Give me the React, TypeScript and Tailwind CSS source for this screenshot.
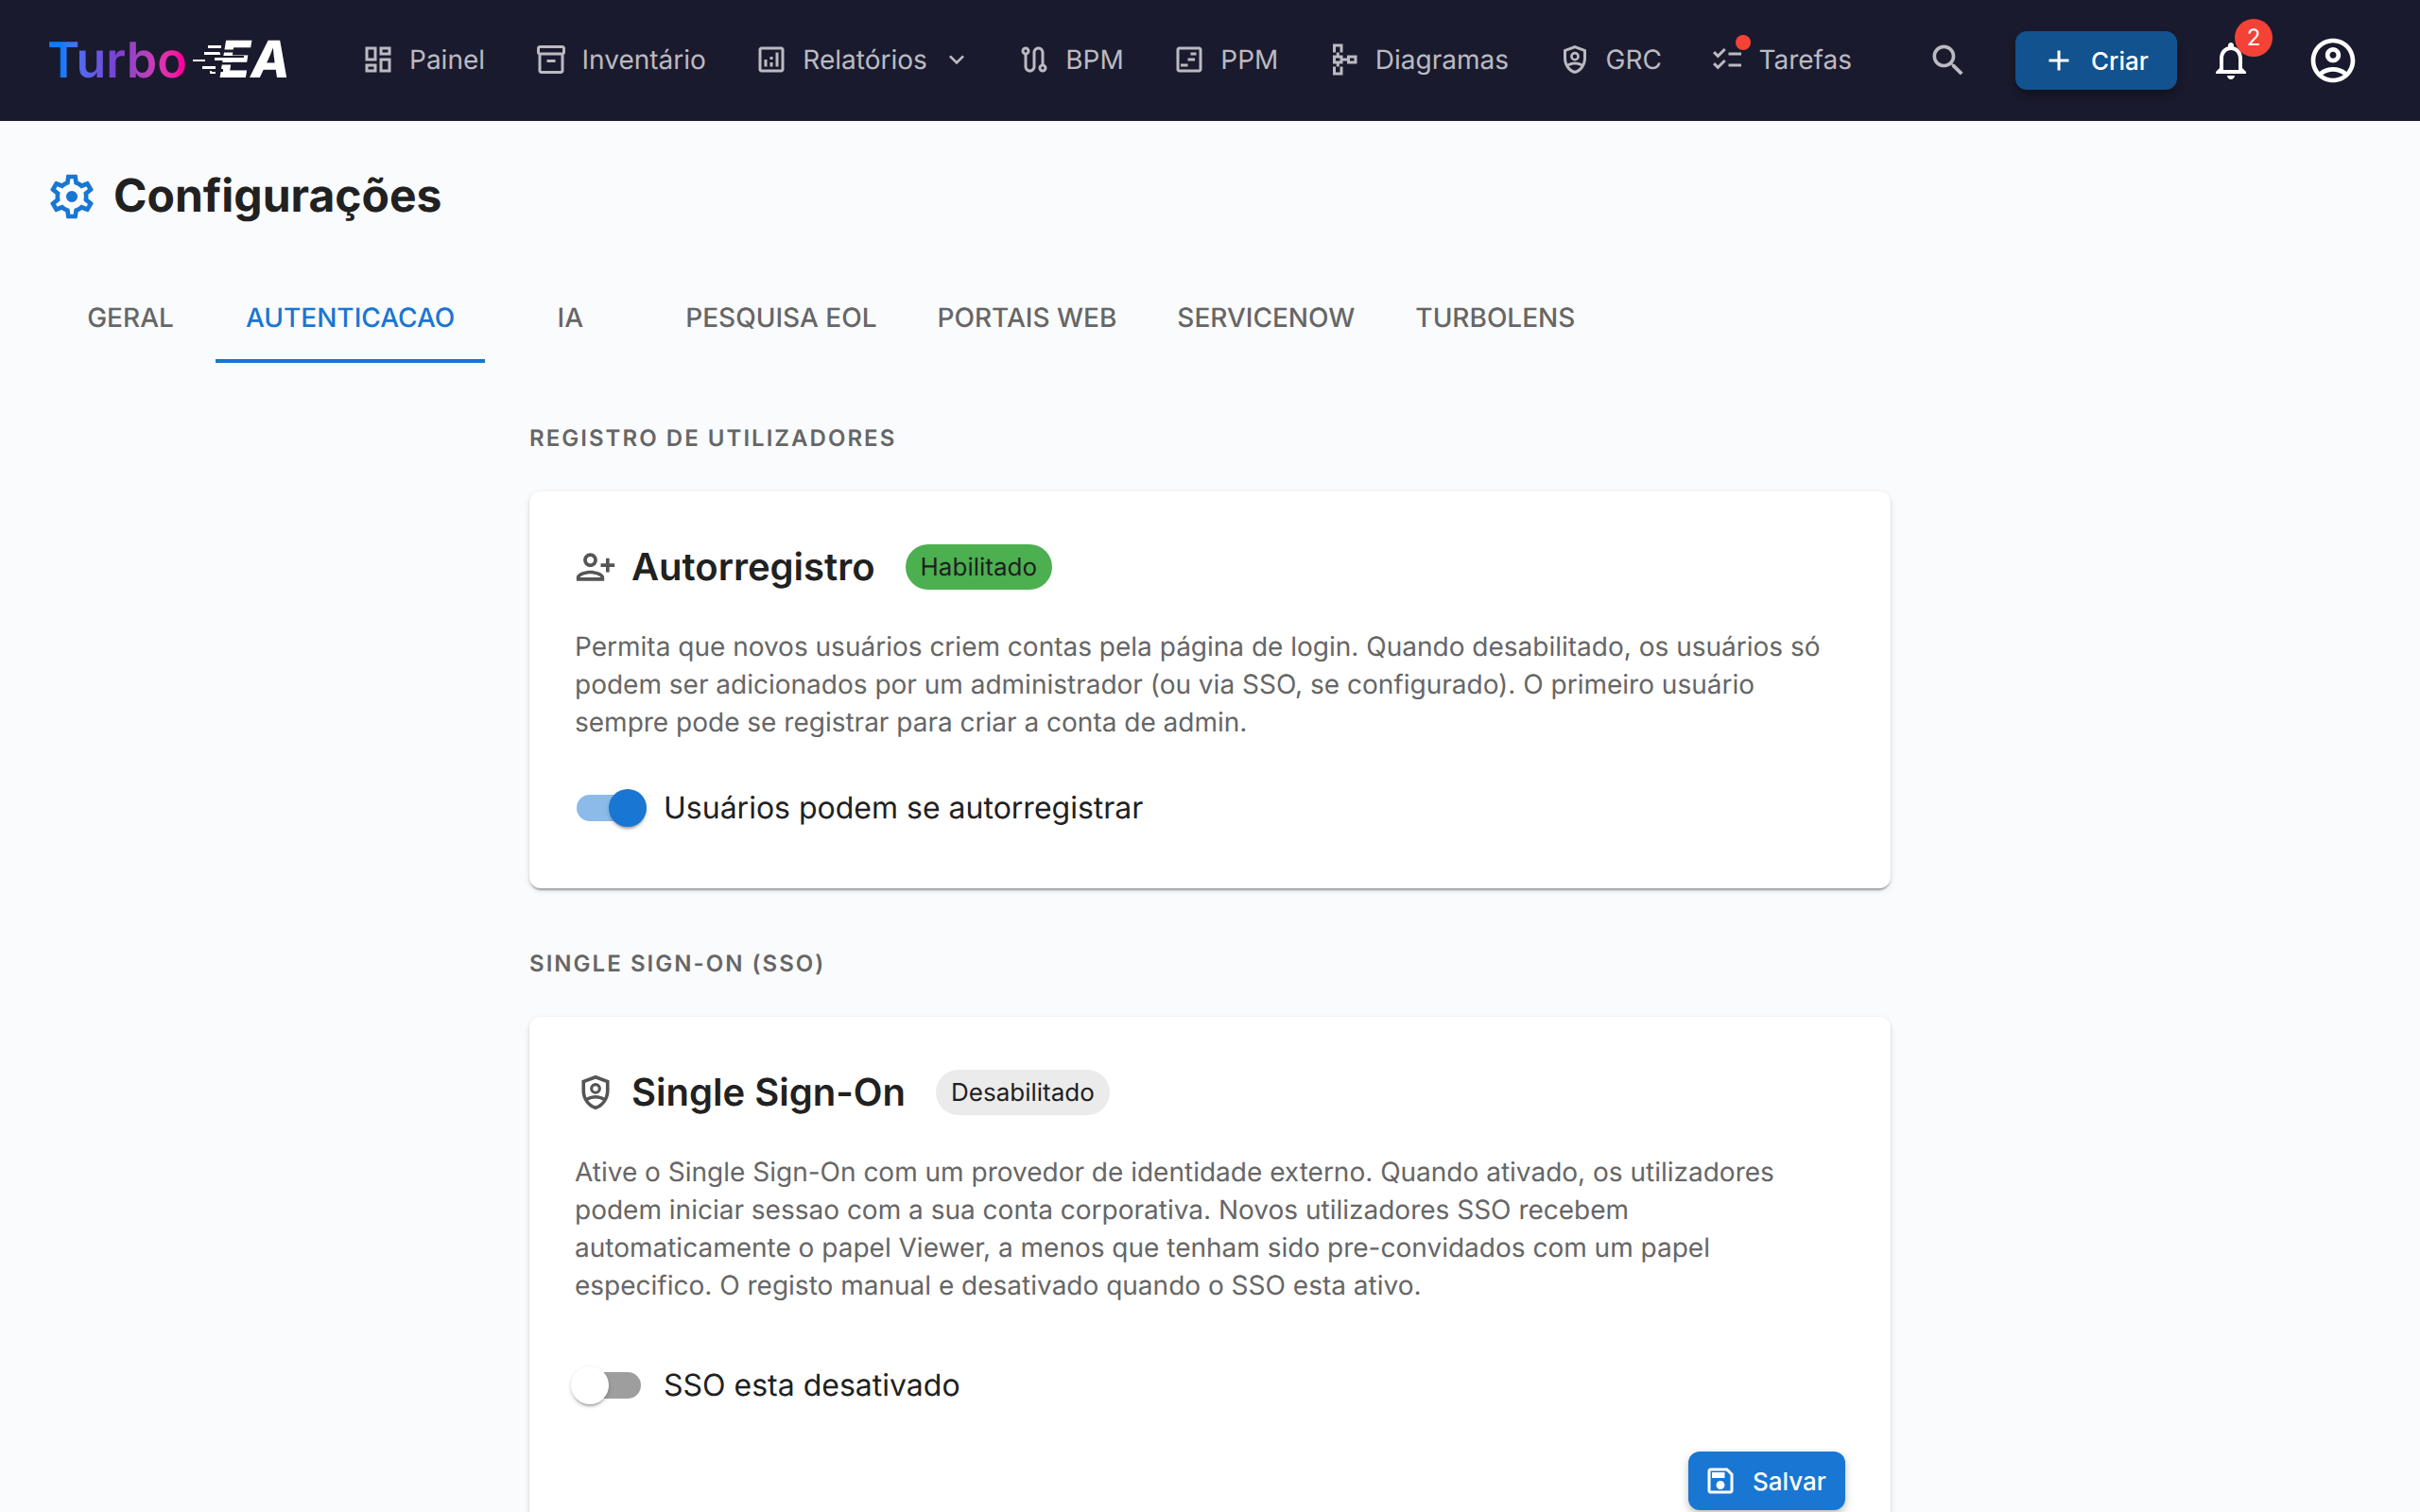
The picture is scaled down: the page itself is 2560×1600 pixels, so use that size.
const icons = {
    dashboard: 'M19 5v2h-4V5h4M9 5v6H5V5h4m10 8v6h-4v-6h4M9 17v2H5v-2h4M21 3h-8v6h8V3zM11 3H3v10h8V3zm10 8h-8v10h8V11zm-10 4H3v6h8v-6z',
    inventory: 'M20 2H4c-1 0-2 .9-2 2v3.01c0 .72.43 1.34 1 1.69V20c0 1.1 1.1 2 2 2h14c.9 0 2-.9 2-2V8.7c.57-.35 1-.97 1-1.69V4c0-1.1-1-2-2-2zm-1 18H5V9h14v11zm1-13H4V4h16v3zM9 12h6v2H9z',
    assessment: 'M19 3H5c-1.1 0-2 .9-2 2v14c0 1.1.9 2 2 2h14c1.1 0 2-.9 2-2V5c0-1.1-.9-2-2-2zm0 16H5V5h14v14zM7 12h2v5H7zm8-5h2v10h-2zm-4 7h2v3h-2zm0-4h2v2h-2z',
    route: 'M19 15.18V7c0-2.21-1.79-4-4-4s-4 1.79-4 4v10c0 1.1-.9 2-2 2s-2-.9-2-2V8.82C8.16 8.4 9 7.3 9 6c0-1.66-1.34-3-3-3S3 4.34 3 6c0 1.3.84 2.4 2 2.82V17c0 2.21 1.79 4 4 4s4-1.79 4-4V7c0-1.1.9-2 2-2s2 .9 2 2v8.18c-1.16.41-2 1.51-2 2.82 0 1.66 1.34 3 3 3s3-1.34 3-3c0-1.3-.84-2.4-2-2.82zM6 5c.55 0 1 .45 1 1s-.45 1-1 1-1-.45-1-1 .45-1 1-1zm12 14c-.55 0-1-.45-1-1s.45-1 1-1 1 .45 1 1-.45 1-1 1z',
    timeline: 'M19 3H5c-1.1 0-2 .9-2 2v14c0 1.1.9 2 2 2h14c1.1 0 2-.9 2-2V5c0-1.1-.9-2-2-2zm0 16H5V5h14v14zM13 7h4v2h-4zM11 11h5v2h-5zM6 15h5v2H6z',
    schema: 'M14 9v2h-3V9H8.5V7H11V1H4v6h2.5v2H4v6h2.5v2H4v6h7v-6H8.5v-2H11v-2h3v2h7V9h-7zM9 7H6V3h3v4zm0 14H6v-4h3v4zm0-8H6v-2h3v2zm10 0h-3v-2h3v2z',
    shieldPerson: 'M12 2 4 5v6.09c0 5.05 3.41 9.76 8 10.91 4.59-1.15 8-5.86 8-10.91V5l-8-3zM12 4.14l6 2.25v4.7c0 1.4-.3 2.7-.8 3.9-1.5-.8-3.3-1.3-5.2-1.3s-3.7.5-5.2 1.3c-.5-1.2-.8-2.5-.8-3.9v-4.7l6-2.25zM12 15.6c1.6 0 3.1.4 4.3 1.1-1.1 1.5-2.6 2.7-4.3 3.2-1.7-.5-3.2-1.7-4.3-3.2 1.2-.7 2.7-1.1 4.3-1.1zM12 6.5a3.25 3.25 0 1 0 0 6.5 3.25 3.25 0 0 0 0-6.5zM12 8.25a1.5 1.5 0 1 1 0 3 1.5 1.5 0 0 1 0-3z',
    checklist: 'M22 7h-9v2h9V7zm0 8h-9v2h9v-2zM5.54 11 2 7.46l1.41-1.41 2.12 2.12 4.24-4.24 1.41 1.41L5.54 11zm0 8L2 15.46l1.41-1.41 2.12 2.12 4.24-4.24 1.41 1.41L5.54 19z',
    search: 'M15.5 14h-.79l-.28-.27C15.41 12.59 16 11.11 16 9.5 16 5.91 13.09 3 9.5 3S3 5.91 3 9.5 5.91 16 9.5 16c1.61 0 3.09-.59 4.23-1.57l.27.28v.79l5 4.99L20.49 19l-4.99-5zm-6 0C7.01 14 5 11.99 5 9.5S7.01 5 9.5 5 14 7.01 14 9.5 11.99 14 9.5 14z',
    add: 'M19 13h-6v6h-2v-6H5v-2h6V5h2v6h6v2z',
    bell: 'M12 22c1.1 0 2-.9 2-2h-4c0 1.1.9 2 2 2zm6-6v-5c0-3.07-1.63-5.64-4.5-6.32V4c0-.83-.67-1.5-1.5-1.5s-1.5.67-1.5 1.5v.68C7.64 5.36 6 7.92 6 11v5l-2 2v1h16v-1l-2-2zm-2 1H8v-6c0-2.48 1.51-4.5 4-4.5s4 2.02 4 4.5v6z',
    account: 'M12 2C6.48 2 2 6.48 2 12s4.48 10 10 10 10-4.48 10-10S17.52 2 12 2zM7.35 18.5C8.66 17.56 10.26 17 12 17s3.34.56 4.65 1.5c-1.31.94-2.91 1.5-4.65 1.5s-3.34-.56-4.65-1.5zm10.79-1.38C16.45 15.8 14.32 15 12 15s-4.45.8-6.14 2.12C4.7 15.73 4 13.95 4 12c0-4.42 3.58-8 8-8s8 3.58 8 8c0 1.95-.7 3.73-1.86 5.12zM12 6c-1.93 0-3.5 1.57-3.5 3.5S10.07 13 12 13s3.5-1.57 3.5-3.5S13.93 6 12 6zm0 5c-.83 0-1.5-.67-1.5-1.5S11.17 8 12 8s1.5.67 1.5 1.5S12.83 11 12 11z',
    gear: 'M19.43 12.98c.04-.32.07-.64.07-.98 0-.34-.03-.66-.07-.98l2.11-1.65c.19-.15.24-.42.12-.64l-2-3.46c-.09-.16-.26-.25-.44-.25-.06 0-.12.01-.17.03l-2.49 1c-.52-.4-1.08-.73-1.69-.98l-.38-2.65C14.46 2.18 14.25 2 14 2h-4c-.25 0-.46.18-.49.42l-.38 2.65c-.61.25-1.17.59-1.69.98l-2.49-1c-.06-.02-.12-.03-.18-.03-.17 0-.34.09-.43.25l-2 3.46c-.13.22-.07.49.12.64l2.11 1.65c-.04.32-.07.65-.07.98 0 .33.03.66.07.98l-2.11 1.65c-.19.15-.24.42-.12.64l2 3.46c.09.16.26.25.44.25.06 0 .12-.01.17-.03l2.49-1c.52.4 1.08.73 1.69.98l.38 2.65c.03.24.24.42.49.42h4c.25 0 .46-.18.49-.42l.38-2.65c.61-.25 1.17-.59 1.69-.98l2.49 1c.06.02.12.03.18.03.17 0 .34-.09.43-.25l2-3.46c.12-.22.07-.49-.12-.64l-2.11-1.65zm-1.98-1.71c.04.31.05.52.05.73 0 .21-.02.43-.05.73l-.14 1.13.89.7 1.08.84-.7 1.21-1.27-.51-1.04-.42-.9.68c-.43.32-.84.56-1.25.73l-1.06.43-.16 1.13-.2 1.35h-1.4l-.19-1.35-.16-1.13-1.06-.43c-.43-.18-.83-.41-1.23-.71l-.91-.7-1.06.43-1.27.51-.7-1.21 1.08-.84.89-.7-.14-1.13c-.03-.31-.05-.54-.05-.74s.02-.43.05-.73l.14-1.13-.89-.7-1.08-.84.7-1.21 1.27.51 1.04.42.9-.68c.43-.32.84-.56 1.25-.73l1.06-.43.16-1.13.2-1.35h1.39l.19 1.35.16 1.13 1.06.43c.43.18.83.41 1.23.71l.91.7 1.06-.43 1.27-.51.7 1.21-1.07.85-.89.7.14 1.13zM12 9.4a2.6 2.6 0 1 0 0 5.2 2.6 2.6 0 0 0 0-5.2z',
    personAdd: 'M13 8c0-2.21-1.79-4-4-4S5 5.79 5 8s1.79 4 4 4 4-1.79 4-4zm-2 0c0 1.1-.9 2-2 2s-2-.9-2-2 .9-2 2-2 2 .9 2 2zM1 18v2h16v-2c0-2.66-5.33-4-8-4s-8 1.34-8 4zm2 0c.2-.71 3.3-2 6-2 2.69 0 5.78 1.28 6 2H3zm17-3v-3h3v-2h-3V7h-2v3h-3v2h3v3h2z',
    save: 'M17 3H5c-1.11 0-2 .9-2 2v14c0 1.1.89 2 2 2h14c1.1 0 2-.9 2-2V7l-4-4zm2 16H5V5h11.17L19 7.83V19zm-7-7c-1.66 0-3 1.34-3 3s1.34 3 3 3 3-1.34 3-3-1.34-3-3-3zM6 6h9v4H6z',
    chevron: 'M7.41 8.59 12 13.17l4.59-4.58L18 10l-6 6-6-6 1.41-1.41z',
}

function Icon({ d, className, viewBox = '0 0 24 24' }: { d: string; className: string; viewBox?: string }) {
    return (
        <svg viewBox={viewBox} fill="currentColor" className={`shrink-0 ${className}`}>
            <path d={d} fillRule="evenodd" />
        </svg>
    )
}

function Logo() {
    return (
        <div className="flex items-center font-semibold text-[52px] leading-none">
            <span className="bg-gradient-to-r from-[#0a7cff] from-10% via-[#7a40d0] via-50% to-[#ff00a0] to-95% bg-clip-text text-transparent">Turbo</span>
            <span className="relative ml-[34px] text-white text-[54px] font-extrabold italic">
                EA
                <svg viewBox="0 0 104 40" className="absolute left-[-30px] top-[9px] w-[104px] h-[40px]">
                    <path d="M2 17h13v2H2zM14 9h17v3H14zM18 2h14v3H18zM25 15h12v3H25zM12 24h14v3H12zM20 29h6v3h-6z" fill="#ffffff" />
                    <path d="M30 6.5h24v3H30zM26 13h30v2H26zM28 20h24v2.5H28zM22 27h12v3H22z" fill="#1a1a2e" />
                </svg>
            </span>
        </div>
    )
}

const navItems = [
    { label: 'Painel', icon: icons.dashboard },
    { label: 'Inventário', icon: icons.inventory },
    { label: 'Relatórios', icon: icons.assessment, chevron: true },
    { label: 'BPM', icon: icons.route },
    { label: 'PPM', icon: icons.timeline },
    { label: 'Diagramas', icon: icons.schema },
    { label: 'GRC', icon: icons.shieldPerson },
    { label: 'Tarefas', icon: icons.checklist, dot: true },
]

function TopBar() {
    return (
        <header className="h-[128px] shrink-0 bg-[#1a1a2e] flex items-center pl-[50px] pr-12">
            <div className="w-[308px] shrink-0"><Logo /></div>
            <nav className="flex items-center gap-[3.5px] -mt-[2px] text-[28px] leading-none text-[#babac1]">
                {navItems.map((item) => (
                    <div key={item.label} className="relative flex items-center gap-[15px] px-6 h-[60px]">
                        <Icon d={item.icon} className="size-9" />
                        <span>{item.label}</span>
                        {item.chevron && <Icon d={icons.chevron} className="size-8 -mr-[3px]" />}
                        {item.dot && <span className="absolute left-[51px] top-[4px] size-4 rounded-full bg-[#f44336]" />}
                    </div>
                ))}
            </nav>
            <div className="ml-auto flex items-center text-white">
                <Icon d={icons.search} className="size-11 text-[#babac1] mr-[49px]" />
                <button className="flex items-center gap-4 h-[62px] w-[171px] pl-7 rounded-xl bg-[#12528f] text-[26px] font-medium shadow-[0_6px_10px_rgba(0,0,0,0.3)]">
                    <Icon d={icons.add} className="size-9" />
                    Criar
                </button>
                <div className="relative ml-[33px]">
                    <Icon d={icons.bell} className="size-12" />
                    <span className="absolute left-[28px] top-[-20px] size-10 flex items-center justify-center rounded-full bg-[#f44336] text-[24px] leading-none">2</span>
                </div>
                <Icon d={icons.account} className="size-14 ml-[56px] mr-4" />
            </div>
        </header>
    )
}

const tabs = ['GERAL', 'AUTENTICACAO', 'IA', 'PESQUISA EOL', 'PORTAIS WEB', 'SERVICENOW', 'TURBOLENS']

function Tabs() {
    return (
        <div className="flex mt-12 h-24">
            {tabs.map((tab) => (
                <div
                    key={tab}
                    className={`min-w-[180px] px-8 pt-1 flex items-center justify-center text-[28px] font-medium border-b-4 ${tab === 'AUTENTICACAO' ? 'text-[#1976d2] border-[#1976d2]' : 'text-[#666666] border-transparent'}`}
                >
                    {tab}
                </div>
            ))}
        </div>
    )
}

function Toggle({ on }: { on: boolean }) {
    return (
        <div className={`relative w-[68px] h-7 rounded-full ${on ? 'bg-[#8cbbe9]' : 'bg-[#9e9e9e]'}`}>
            <span
                className={`absolute top-[-6px] size-10 rounded-full shadow-[0_4px_2px_-2px_rgba(0,0,0,0.2),0_2px_4px_rgba(0,0,0,0.2)] ${on ? 'left-[34px] bg-[#1976d2]' : 'left-[-6px] bg-white'}`}
            />
        </div>
    )
}

function SectionLabel({ children, className }: { children: string; className: string }) {
    return <div className={`text-[24px] leading-8 font-semibold tracking-[0.085em] text-[#666666] ${className}`}>{children}</div>
}

function Card({ children, className }: { children: React.ReactNode; className: string }) {
    return (
        <section className={`bg-white rounded-xl px-12 pt-14 pb-[47px] shadow-[0_4px_2px_-2px_rgba(0,0,0,0.2),0_2px_2px_rgba(0,0,0,0.14),0_2px_6px_rgba(0,0,0,0.12)] ${className}`}>
            {children}
        </section>
    )
}

function CardTitle({ icon, iconClass, viewBox, title, chip, chipClass }: { icon: string; iconClass: string; viewBox?: string; title: string; chip: string; chipClass: string }) {
    return (
        <div className="flex items-center h-12">
            <Icon d={icon} viewBox={viewBox} className={`text-[#555555] ${iconClass}`} />
            <h2 className="text-[40px] leading-none font-semibold text-[#212121]">{title}</h2>
            <span className={`ml-8 h-12 px-4 flex items-center rounded-full text-[26px] text-[#1f1f1f] ${chipClass}`}>{chip}</span>
        </div>
    )
}

export default function App() {
    return (
        <div className="h-screen overflow-hidden flex flex-col bg-[#fafbfd] font-['Inter',sans-serif] antialiased [text-rendering:geometricPrecision]">
            <TopBar />
            <main className="px-12 pt-12">
                <div className="flex items-center h-16">
                    <Icon d={icons.gear} className="size-14 text-[#1976d2]" />
                    <h1 className="ml-4 text-[48px] leading-none font-bold text-[#212121] -mt-[2px]">Configurações</h1>
                </div>
                <Tabs />
                <div className="w-[1440px] mx-auto">
                    <SectionLabel className="mt-[64px]">REGISTRO DE UTILIZADORES</SectionLabel>
                    <Card className="mt-10">
                        <CardTitle icon={icons.personAdd} iconClass="size-11 mr-4" title="Autorregistro" chip="Habilitado" chipClass="bg-[#4caf50]" />
                        <p className="mt-10 text-[28px] leading-10 text-[#666666]">
                            Permita que novos usuários criem contas pela página de login. Quando desabilitado, os usuários só podem ser adicionados por um administrador (ou via SSO, se configurado). O primeiro usuário sempre pode se registrar para criar a conta de admin.
                        </p>
                        <div className="mt-[33px] h-[76px] flex items-center gap-6 pl-[2px] text-[32px] text-[#212121]">
                            <Toggle on />
                            <span>Usuários podem se autorregistrar</span>
                        </div>
                    </Card>
                    <SectionLabel className="mt-[64px]">SINGLE SIGN-ON (SSO)</SectionLabel>
                    <Card className="mt-10">
                        <CardTitle icon={icons.shieldPerson} iconClass="size-10 ml-[2px] mr-[18px]" viewBox="1 1 22 22" title="Single Sign-On" chip="Desabilitado" chipClass="bg-[#ebebeb]" />
                        <p className="mt-10 text-[28px] leading-10 text-[#666666]">
                            Ative o Single Sign-On com um provedor de identidade externo. Quando ativado, os utilizadores podem iniciar sessao com a sua conta corporativa. Novos utilizadores SSO recebem automaticamente o papel Viewer, a menos que tenham sido pre-convidados com um papel especifico. O registo manual e desativado quando o SSO esta ativo.
                        </p>
                        <div className="mt-12 h-[76px] flex items-center gap-6 pl-[2px] text-[32px] text-[#212121]">
                            <Toggle on={false} />
                            <span>SSO esta desativado</span>
                        </div>
                        <div className="flex justify-end mt-8">
                            <button className="flex items-center gap-[16px] h-[62px] w-[166px] pl-4 rounded-xl bg-[#1976d2] text-white text-[26px] font-medium shadow-[0_4px_8px_rgba(0,0,0,0.25)]">
                                <Icon d={icons.save} className="size-9" />
                                Salvar
                            </button>
                        </div>
                    </Card>
                </div>
            </main>
        </div>
    )
}
